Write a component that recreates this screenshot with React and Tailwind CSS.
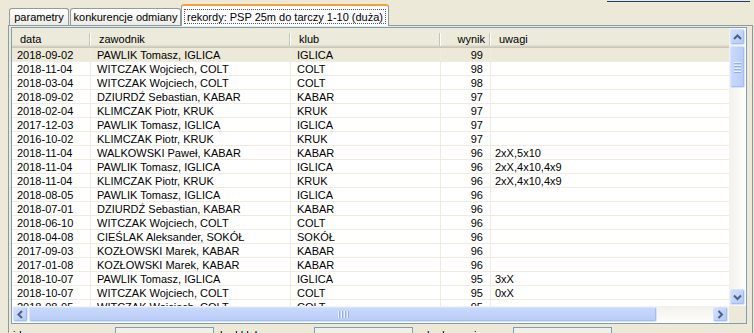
import clsx from "clsx";

const rows = [
  ["2018-09-02", "PAWLIK Tomasz, IGLICA", "IGLICA", "99", ""],
  ["2018-11-04", "WITCZAK Wojciech, COLT", "COLT", "98", ""],
  ["2018-03-04", "WITCZAK Wojciech, COLT", "COLT", "98", ""],
  ["2018-09-02", "DZIURDŹ Sebastian, KABAR", "KABAR", "97", ""],
  ["2018-02-04", "KLIMCZAK Piotr, KRUK", "KRUK", "97", ""],
  ["2017-12-03", "PAWLIK Tomasz, IGLICA", "IGLICA", "97", ""],
  ["2016-10-02", "KLIMCZAK Piotr, KRUK", "KRUK", "97", ""],
  ["2018-11-04", "WALKOWSKI Paweł, KABAR", "KABAR", "96", "2xX,5x10"],
  ["2018-11-04", "PAWLIK Tomasz, IGLICA", "IGLICA", "96", "2xX,4x10,4x9"],
  ["2018-11-04", "KLIMCZAK Piotr, KRUK", "KRUK", "96", "2xX,4x10,4x9"],
  ["2018-08-05", "PAWLIK Tomasz, IGLICA", "IGLICA", "96", ""],
  ["2018-07-01", "DZIURDŹ Sebastian, KABAR", "KABAR", "96", ""],
  ["2018-06-10", "WITCZAK Wojciech, COLT", "COLT", "96", ""],
  ["2018-04-08", "CIEŚLAK Aleksander, SOKÓŁ", "SOKÓŁ", "96", ""],
  ["2017-09-03", "KOZŁOWSKI Marek, KABAR", "KABAR", "96", ""],
  ["2017-01-08", "KOZŁOWSKI Marek, KABAR", "KABAR", "96", ""],
  ["2018-10-07", "PAWLIK Tomasz, IGLICA", "IGLICA", "95", "3xX"],
  ["2018-10-07", "WITCZAK Wojciech, COLT", "COLT", "95", "0xX"],
  ["2018-08-05", "WITCZAK Wojciech, COLT", "COLT", "95", ""],
];

const paths = {
  up: "M1 5L4.5 1.5L8 5",
  down: "M1 1.5L4.5 5L8 1.5",
  left: "M5 1L1.5 4.5L5 8",
  right: "M1.5 1L5 4.5L1.5 8",
};

function Arrow({ dir }) {
  const horiz = dir === "left" || dir === "right";
  return (
    <svg width={horiz ? 7 : 9} height={horiz ? 9 : 7} viewBox={horiz ? "0 0 7 9" : "0 0 9 7"}>
      <path d={paths[dir]} stroke="#4D6185" strokeWidth="2" fill="none" />
    </svg>
  );
}

const btn = "flex shrink-0 items-center justify-center rounded-[2px] border border-[#D6E2FE] bg-linear-to-br from-[#D3E0FD] to-[#B5C9F6] shadow-[inset_-1px_-1px_0_#A8BDEE]";

function HeaderCell({ w, children, right, sep = true }) {
  return (
    <div className={clsx("flex h-[17px] shrink-0 items-center", w)}>
      <span className={clsx("flex-1 leading-[17px]", right ? "pr-[4px] text-right" : "pl-[8px]")}>{children}</span>
      {sep && <span className="h-[13px] w-[2px] border-l border-r border-l-[#C7C5B2] border-r-white" />}
    </div>
  );
}

export default function App() {
  return (
    <div className="h-[333px] w-[754px] overflow-hidden bg-[#ECE9D8] font-['Liberation_Sans',Arial,sans-serif] text-[11px] text-black">
      <div className="flex h-[2px] justify-end">
        <div className="mr-[4px] mt-px h-px w-[143px] bg-[#1F3F75]" />
      </div>

      {/* tabs */}
      <div className="relative z-10 flex h-[24px] items-end pl-[9px]">
        <div className="mb-px flex h-[17px] w-[60px] items-center justify-center rounded-t-[3px] border border-b-0 border-[#919B9C] bg-linear-to-b from-white to-[#ECEBE6] leading-[16px]">
          parametry
        </div>
        <div className="mb-px ml-px flex h-[17px] w-[111px] items-center justify-center rounded-t-[3px] border border-b-0 border-[#919B9C] bg-linear-to-b from-white to-[#ECEBE6] leading-[16px]">
          konkurencje odmiany
        </div>
        <div className="flex h-[22px] w-[208px] flex-col rounded-t-[3px] border-x border-t-2 border-x-[#919B9C] border-t-[#F1A33B] bg-[#FCFCFE] px-[2px] pt-[3px]">
          <span className="flex h-[15px] items-center justify-center border border-dotted border-[#555] leading-[14px]">
            rekordy: PSP 25m do tarczy 1-10 (duża)
          </span>
        </div>
      </div>

      {/* tab panel */}
      <div className="-mt-px ml-[8px] h-[320px] w-[745px] border border-[#919B9C] pt-px pl-[2px]">
        <div className="grid h-[297px] w-[736px] grid-cols-[717px_17px] grid-rows-[278px_17px] border border-[#7F9DB9] bg-white">
          {/* list content */}
          <div className="overflow-hidden">
            <div className="flex h-[20px] bg-[#EBEADB] pt-[3px] shadow-[inset_0_-1px_0_#CBC7B8,inset_0_-2px_0_#D6D2C2,inset_0_-3px_0_#E2DECD]">
              <HeaderCell w="w-[79px]">data</HeaderCell>
              <HeaderCell w="w-[200px]">zawodnik</HeaderCell>
              <HeaderCell w="w-[150px]">klub</HeaderCell>
              <HeaderCell w="w-[50px]" right>wynik</HeaderCell>
              <HeaderCell w="w-[240px]" sep={false}>uwagi</HeaderCell>
            </div>
            {rows.map((r, i) => (
              <div key={i} className={clsx("flex h-[14px] border-b border-[#EFEBDE] leading-[15px] whitespace-nowrap", i === 0 && "bg-[#ECE9D8]")}>
                <div className="w-[79px] shrink-0 border-r border-[#EFEBDE] pl-[5px]">{r[0]}</div>
                <div className="w-[200px] shrink-0 border-r border-[#EFEBDE] pl-[6px]">{r[1]}</div>
                <div className="w-[150px] shrink-0 border-r border-[#EFEBDE] pl-[6px]">{r[2]}</div>
                <div className="w-[50px] shrink-0 border-r border-[#EFEBDE] pr-[7px] text-right">{r[3]}</div>
                <div className="flex-1 pl-[4px]">{r[4]}</div>
              </div>
            ))}
          </div>

          {/* vertical scrollbar */}
          <div className="flex flex-col items-center bg-linear-to-r from-[#F3F1EC] to-[#FEFEFB] py-px">
            <div className={clsx(btn, "h-[16px] w-[15px]")}>
              <Arrow dir="up" />
            </div>
            <div className="mt-px flex h-[42px] w-[15px] flex-col items-center justify-center gap-px rounded-[2px] border border-[#D6E2FE] bg-linear-to-r from-[#C9D9FC] to-[#B8CCF7] shadow-[inset_-1px_-1px_0_#A8BDEE]">
              <span className="h-px w-[7px] bg-[#EEF4FE] shadow-[0_1px_0_#8CAEF0]" />
              <span className="mt-px h-px w-[7px] bg-[#EEF4FE] shadow-[0_1px_0_#8CAEF0]" />
              <span className="mt-px h-px w-[7px] bg-[#EEF4FE] shadow-[0_1px_0_#8CAEF0]" />
              <span className="mt-px h-px w-[7px] bg-[#EEF4FE] shadow-[0_1px_0_#8CAEF0]" />
            </div>
            <div className="flex-1" />
            <div className={clsx(btn, "h-[16px] w-[15px]")}>
              <Arrow dir="down" />
            </div>
          </div>

          {/* horizontal scrollbar */}
          <div className="flex items-center bg-linear-to-b from-[#F3F1EC] to-[#FEFEFB] px-px">
            <div className={clsx(btn, "h-[15px] w-[15px]")}>
              <Arrow dir="left" />
            </div>
            <div className="ml-px flex h-[15px] w-[628px] items-center justify-center gap-px rounded-[2px] border border-[#D6E2FE] bg-linear-to-b from-[#C9D9FC] to-[#B8CCF7] shadow-[inset_-1px_-1px_0_#A8BDEE]">
              <span className="h-[7px] w-px bg-[#EEF4FE] shadow-[1px_0_0_#8CAEF0]" />
              <span className="ml-px h-[7px] w-px bg-[#EEF4FE] shadow-[1px_0_0_#8CAEF0]" />
              <span className="ml-px h-[7px] w-px bg-[#EEF4FE] shadow-[1px_0_0_#8CAEF0]" />
              <span className="ml-px h-[7px] w-px bg-[#EEF4FE] shadow-[1px_0_0_#8CAEF0]" />
            </div>
            <div className="flex-1" />
            <div className={clsx(btn, "h-[15px] w-[15px]")}>
              <Arrow dir="right" />
            </div>
          </div>
          <div className="bg-[#ECE9D8]" />
        </div>

        {/* fields under the list */}
        <div className="mt-[3px] flex items-start">
          <span className="w-[104px] shrink-0 pl-[2px] pt-[1px] leading-[15px]">id</span>
          <div className="h-[20px] w-[99px] shrink-0 border border-[#7F9DB9] bg-[#F1EFE6]" />
          <span className="w-[100px] shrink-0 pl-[6px] pt-[1px] leading-[15px]">kod klubu</span>
          <div className="h-[20px] w-[99px] shrink-0 border border-[#7F9DB9] bg-[#F1EFE6]" />
          <span className="w-[100px] shrink-0 pl-[14px] pt-[1px] leading-[15px]">kod uwagi</span>
          <div className="h-[20px] w-[99px] shrink-0 border border-[#7F9DB9] bg-[#F1EFE6]" />
        </div>
      </div>
    </div>
  );
}
